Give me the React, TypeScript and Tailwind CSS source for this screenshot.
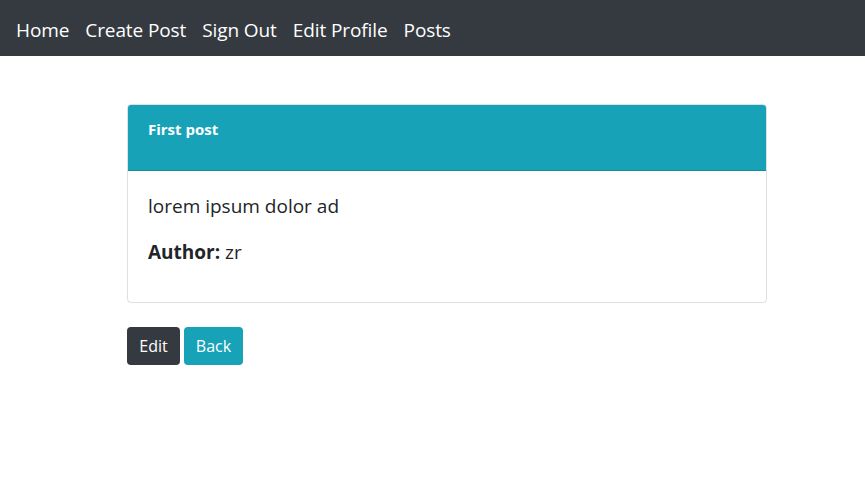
export default function App() {
  const links = ["Home", "Create Post", "Sign Out", "Edit Profile", "Posts"]

  return (
    <div className="min-h-screen bg-white text-[#212529] font-['Open_Sans',sans-serif]">
      {/* Navbar */}
      <nav className="flex h-14 items-center bg-[#343a40] px-2 pt-1">
        {links.map((l) => (
          <a key={l} href="#" className="px-2 text-[19px] leading-[30px] tracking-[-0.1px] text-white">
            {l}
          </a>
        ))}
      </nav>

      <main className="pl-[127px] pt-12">
        {/* Post card */}
        <div className="w-[640px] overflow-hidden rounded border border-black/[.125]">
          <div className="h-[66px] border-b border-black/[.125] bg-[#17a2b8] px-5 pt-[14px]">
            <h6 className="text-[15px] leading-[20px] font-bold text-white">First post</h6>
          </div>
          <div className="px-5 pt-5 pb-[19px]">
            <p className="mb-4 text-[19px] leading-[30px]">lorem ipsum dolor ad</p>
            <p className="mb-4 text-[19px] leading-[30px]">
              <span className="font-bold">Author:</span> zr
            </p>
          </div>
        </div>

        <div className="mt-6 flex gap-1">
          <button className="w-[53px] rounded bg-[#343a40] py-[7px] text-base leading-6 text-white">Edit</button>
          <button className="w-[59px] rounded bg-[#17a2b8] py-[7px] text-base leading-6 text-white">Back</button>
        </div>
      </main>
    </div>
  )
}
